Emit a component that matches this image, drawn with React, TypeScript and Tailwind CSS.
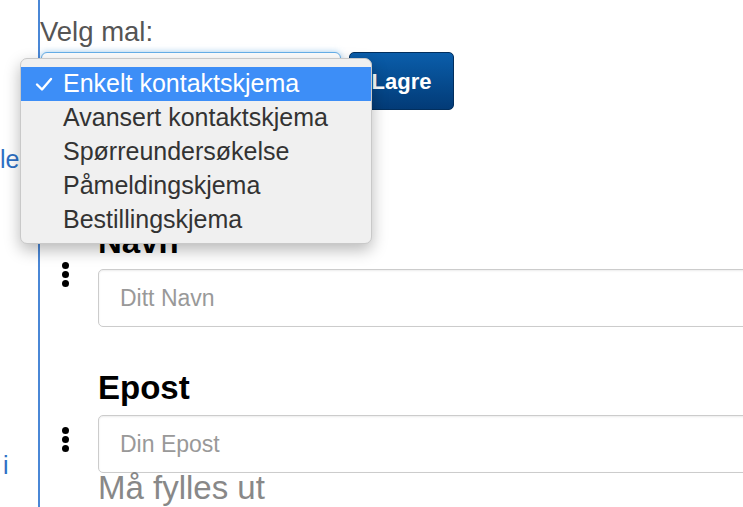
import React from 'react';

const templates = [
  'Enkelt kontaktskjema',
  'Avansert kontaktskjema',
  'Spørreundersøkelse',
  'Påmeldingskjema',
  'Bestillingskjema',
];

type Field = { label: string; placeholder: string; handleTop: string; note?: string };

const fields: Field[] = [
  { label: 'Navn', placeholder: 'Ditt Navn', handleTop: 'mt-[37px]' },
  { label: 'Epost', placeholder: 'Din Epost', handleTop: 'mt-[56px]', note: 'Må fylles ut' },
];

function DragHandle({ className }: { className: string }) {
  return (
    <div className={`flex w-[7px] shrink-0 flex-col gap-[2px] ${className}`}>
      <span className="h-[7px] w-[7px] rounded-full bg-black" />
      <span className="h-[7px] w-[7px] rounded-full bg-black" />
      <span className="h-[7px] w-[7px] rounded-full bg-black" />
    </div>
  );
}

export default function App() {
  return (
    <div className="relative h-[507px] w-[743px] overflow-hidden bg-white font-['Liberation_Sans',Arial,sans-serif]">
      <div className="flex h-full">
        {/* cut-off sidebar */}
        <aside className="w-[40px] shrink-0 overflow-hidden border-r-2 border-[#4a87d6] text-[25px] leading-[30px] text-[#2d6fc4]">
          <div className="pt-[144px]">le</div>
          <div className="mt-[276px] pl-[3px]">i</div>
        </aside>

        <main className="min-w-0 flex-1 overflow-hidden">
          <label className="block pt-[17px] text-[27.5px] leading-[30px] text-[#555]">Velg mal:</label>
          <div className="mt-[5px] flex">
            <div className="ml-[1px] h-[58px] w-[300px] rounded-[6px] border border-[#66afe9] bg-white shadow-[0_0_6px_rgba(102,175,233,0.6)]" />
            <button className="ml-[8px] h-[58px] w-[105px] rounded-[5px] border border-[#022f5e] bg-gradient-to-b from-[#0b5eab] to-[#033b77] text-[22px] font-bold text-white">
              Lagre
            </button>
          </div>

          <div className="mt-[115px] flex flex-col gap-[44px] pl-[22px]">
            {fields.map((f) => (
              <div key={f.label} className="flex">
                <DragHandle className={f.handleTop} />
                <div className="ml-[29px] min-w-0 flex-1">
                  <h3 className="mb-[10px] text-[33px] font-bold leading-[34px] text-black">{f.label}</h3>
                  <div className="flex h-[58px] w-[700px] items-center rounded-[5px] border border-[#ccc] pl-[21px] text-[23px] text-[#999] shadow-[inset_0_1px_2px_rgba(0,0,0,0.08)]">
                    {f.placeholder}
                  </div>
                  {f.note && <p className="text-[33px] leading-[30px] text-[#888]">{f.note}</p>}
                </div>
              </div>
            ))}
          </div>
        </main>
      </div>

      {/* open select menu */}
      <div className="absolute left-[20px] top-[58px] w-[352px] rounded-[7px] border border-[#c9c9c9] bg-[#f0f0f0] pb-[6px] pt-[8px] shadow-[0_6px_16px_rgba(0,0,0,0.28)]">
        {templates.map((t, i) => (
          <div
            key={t}
            className={`flex h-[34px] items-center text-[25px] ${i === 0 ? 'bg-[#3d8ef7] text-white' : 'text-[#333]'}`}
          >
            <span className="flex w-[42px] shrink-0 justify-end pr-[10px]">
              {i === 0 && (
                <svg width="18" height="16" viewBox="0 0 18 16" fill="none">
                  <polyline points="2,8.5 7,13.5 16,3" stroke="white" strokeWidth="2.4" strokeLinecap="round" strokeLinejoin="round" />
                </svg>
              )}
            </span>
            {t}
          </div>
        ))}
      </div>
    </div>
  );
}
